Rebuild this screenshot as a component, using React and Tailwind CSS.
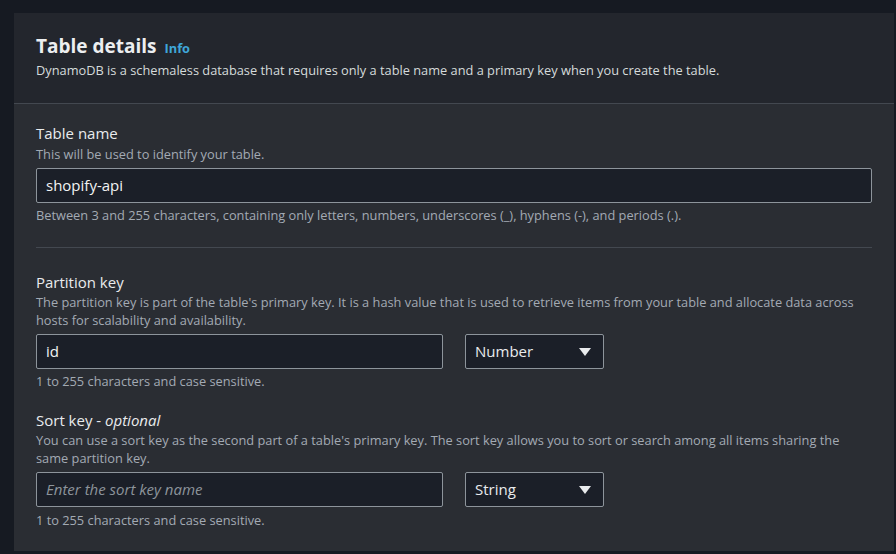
export default function App() {
  return (
    <div className="min-h-[554px] w-[896px] bg-[#161a22] pt-[13px] pl-[14px] pr-[2px] pb-[3px] font-['Open_Sans',sans-serif]">
      <div className="bg-[#2a2d33]">
        <div className="bg-[#23262d] border-b border-[#434850] px-[22px] pt-[21px] h-[91px]">
          <div className="flex items-baseline gap-2">
            <h2 className="text-[19px] leading-[24px] font-bold text-[#eceef0]">Table details</h2>
            <span className="text-[12.8px] font-bold text-[#3fa7d9]">Info</span>
          </div>
          <p className="mt-[2px] text-[12.8px] leading-[20px] text-[#d5dbdb]">
            DynamoDB is a schemaless database that requires only a table name and a primary key when you create the table.
          </p>
        </div>

        <div className="px-[22px] pt-[18px] pb-[22px]">
          <div className="text-[15px] leading-[22px] text-[#e9ebed]">Table name</div>
          <div className="text-[12.8px] leading-[20px] text-[#a3aab3]">This will be used to identify your table.</div>
          <div className="mt-[4px] h-[35px] border border-[#8d949b] bg-[#1b1f28] rounded-[2px] flex items-center px-[9px] text-[15px] text-[#f2f3f3]">
            shopify-api
          </div>
          <div className="mt-[2px] text-[12.8px] leading-[20px] text-[#a3aab3]">
            Between 3 and 255 characters, containing only letters, numbers, underscores (_), hyphens (-), and periods (.).
          </div>
          <div className="mt-[22px] h-px bg-[#434850]" />

          <div className="mt-[23px] text-[15px] leading-[22px] text-[#e9ebed]">Partition key</div>
          <div className="text-[12.8px] leading-[18px] text-[#a3aab3]">
            The partition key is part of the table's primary key. It is a hash value that is used to retrieve items from your table and allocate data across hosts for scalability and availability.
          </div>
          <div className="mt-[5px] flex gap-[22px]">
            <div className="w-[407px] h-[35px] border border-[#8d949b] bg-[#1b1f28] rounded-[2px] flex items-center px-[9px] text-[15px] text-[#f2f3f3]">
              id
            </div>
            <div className="w-[139px] h-[35px] border border-[#8d949b] bg-[#1b1f28] rounded-[2px] flex items-center justify-between pl-[9px] pr-[12px] text-[15px] text-[#e9ebed]">
              <span>Number</span>
              <svg width="12" height="10" viewBox="0 0 12 10"><path d="M0 1 H12 L6 9 Z" fill="#e9ebed" /></svg>
            </div>
          </div>
          <div className="mt-[3px] text-[12.8px] leading-[18px] text-[#a3aab3]">1 to 255 characters and case sensitive.</div>

          <div className="mt-[19px] text-[15px] leading-[22px] text-[#e9ebed]">
            Sort key - <i>optional</i>
          </div>
          <div className="text-[12.8px] leading-[18px] text-[#a3aab3]">
            You can use a sort key as the second part of a table's primary key. The sort key allows you to sort or search among all items sharing the same partition key.
          </div>
          <div className="mt-[5px] flex gap-[22px]">
            <div className="w-[407px] h-[35px] border border-[#8d949b] bg-[#1b1f28] rounded-[2px] flex items-center px-[9px] text-[15px] italic text-[#8d949b]">
              Enter the sort key name
            </div>
            <div className="w-[139px] h-[35px] border border-[#8d949b] bg-[#1b1f28] rounded-[2px] flex items-center justify-between pl-[9px] pr-[12px] text-[15px] text-[#e9ebed]">
              <span>String</span>
              <svg width="12" height="10" viewBox="0 0 12 10"><path d="M0 1 H12 L6 9 Z" fill="#e9ebed" /></svg>
            </div>
          </div>
          <div className="mt-[4px] text-[12.8px] leading-[18px] text-[#a3aab3]">1 to 255 characters and case sensitive.</div>
        </div>
      </div>
    </div>
  );
}
